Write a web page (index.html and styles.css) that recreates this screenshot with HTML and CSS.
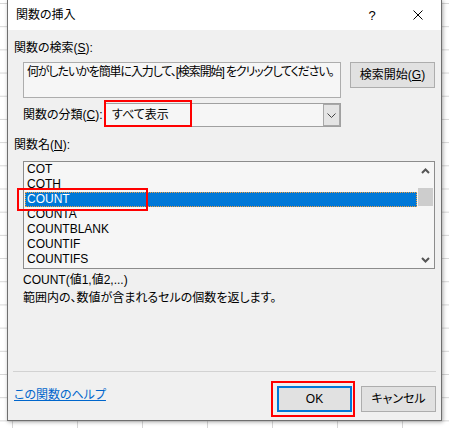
FILE: index.html
```html
<!DOCTYPE html>
<html lang="ja">
<head>
<meta charset="utf-8">
<title>関数の挿入</title>
<link rel="stylesheet" href="styles.css">
</head>
<body>
<div class="dialog">
  <div class="titlebar">
    <span class="title">関数の挿入</span>
    <span class="tb-btn help">?</span>
    <span class="tb-btn close">
      <svg width="10" height="10" viewBox="0 0 10 10"><path d="M0.5 0.5 L9.5 9.5 M9.5 0.5 L0.5 9.5" stroke="#000" stroke-width="1" fill="none"/></svg>
    </span>
  </div>
  <div class="body">
    <div class="label">関数の検索(<u>S</u>):</div>
    <div class="search-row">
      <div class="search-box">何がしたいかを簡単に入力して、[検索開始] をクリックしてください。</div>
      <div class="btn search-btn">検索開始(<u>G</u>)</div>
    </div>
    <div class="cat-row">
      <div class="cat-label">関数の分類(<u>C</u>):</div>
      <div class="select">
        <span class="select-text">すべて表示</span>
        <span class="select-arrow">
          <svg width="9" height="5" viewBox="0 0 9 5"><path d="M0.5 0.5 L4.5 4.5 L8.5 0.5" stroke="#444" stroke-width="1" fill="none"/></svg>
        </span>
        <span class="mark mark-cat"></span>
      </div>
    </div>
    <div class="label name-label">関数名(<u>N</u>):</div>
    <div class="listbox">
      <ul class="items">
        <li>COT</li>
        <li>COTH</li>
        <li class="selected">COUNT</li>
        <li>COUNTA</li>
        <li>COUNTBLANK</li>
        <li>COUNTIF</li>
        <li>COUNTIFS</li>
      </ul>
      <div class="scrollbar">
        <span class="sb-arrow">
          <svg width="9" height="6" viewBox="0 0 9 6"><path d="M1 5 L4.5 1.5 L8 5" stroke="#555" stroke-width="2" fill="none"/></svg>
        </span>
        <span class="sb-thumb"></span>
        <span class="sb-space"></span>
        <span class="sb-arrow">
          <svg width="9" height="6" viewBox="0 0 9 6"><path d="M1 1 L4.5 4.5 L8 1" stroke="#555" stroke-width="2" fill="none"/></svg>
        </span>
      </div>
      <span class="mark mark-count"></span>
    </div>
    <div class="desc">
      <div>COUNT(値1,値2,...)</div>
      <div>範囲内の、数値が含まれるセルの個数を返します。</div>
    </div>
    <div class="separator"></div>
    <div class="footer">
      <a class="help-link" href="#">この関数のヘルプ</a>
      <div class="buttons">
        <div class="btn ok-btn">OK<span class="mark mark-ok"></span></div>
        <div class="btn cancel-btn">キャンセル</div>
      </div>
    </div>
  </div>
</div>
</body>
</html>
```
FILE: styles.css
```css
* { box-sizing: border-box; }
html, body { margin: 0; padding: 0; }
body {
  width: 449px;
  height: 428px;
  overflow: hidden;
  background-color: #ffffff;
  background-image:
    linear-gradient(to right, #d6d6d6 1px, transparent 1px),
    linear-gradient(to bottom, #d6d6d6 1px, transparent 1px);
  background-size: 65px 23.2px;
  background-position: 12px 3px;
  font-family: "Liberation Sans", "Noto Sans CJK JP", sans-serif;
  font-size: 12px;
  font-feature-settings: "palt";
  color: #000;
}
u { text-decoration: underline; text-underline-offset: 1px; }
.dialog {
  margin-left: 7px;
  width: 435px;
  height: 421px;
  border: 1px solid #6f6f6f;
  border-top: 0;
  background: #f0f0f0;
  box-shadow: 1px 1px 4px rgba(0,0,0,0.35);
  display: flex;
  flex-direction: column;
}
.titlebar {
  height: 30px;
  background: #fff;
  display: flex;
  align-items: center;
  padding-left: 8px;
  flex: none;
}
.title { flex: 1; line-height: 16px; }
.tb-btn {
  width: 46px;
  height: 30px;
  display: flex;
  align-items: center;
  justify-content: center;
  font-size: 13px;
}
.body {
  flex: 1;
  display: flex;
  flex-direction: column;
  padding: 0 5px 8px 6px;
}
.label { line-height: 16px; margin-top: 10px; }
.search-row {
  display: flex;
  align-items: flex-start;
  margin-top: 6px;
  padding-left: 9px;
  gap: 9px;
}
.search-box {
  width: 318px;
  height: 36px;
  border: 1px solid #adadad;
  background: #f6f6f6;
  padding: 1px 3px;
  line-height: 16px;
  letter-spacing: -1.1px;
  white-space: nowrap;
  overflow: hidden;
}
.btn {
  height: 26px;
  background: #e1e1e1;
  border: 1px solid #adadad;
  display: flex;
  align-items: center;
  justify-content: center;
  line-height: 16px;
}
.search-btn { width: 85px; }
.cat-row {
  display: flex;
  align-items: center;
  margin-top: 5px;
  padding-left: 9px;
}
.cat-label { width: 82px; line-height: 16px; }
.select {
  position: relative;
  width: 236px;
  height: 24px;
  border: 1px solid #a0a0a0;
  background: #f6f6f6;
  display: flex;
  align-items: stretch;
}
.select-text { flex: 1; padding-left: 6px; line-height: 22px; }
.select-arrow {
  width: 17px;
  background: #e4e4e4;
  border: 1px solid #a8a8a8;
  display: flex;
  align-items: center;
  justify-content: center;
}
.name-label { margin-top: 10px; }
.listbox {
  position: relative;
  margin-top: 8px;
  margin-left: 9px;
  width: 412px;
  height: 108px;
  border: 1px solid #8c8c8c;
  background: #f6f6f6;
  display: flex;
}
.items {
  list-style: none;
  margin: 0 0 0 1px;
  padding: 0;
  width: 392px;
}
.items li {
  line-height: 15px;
  height: 15px;
  padding-left: 2px;
}
.items li.selected {
  background: #0078d7;
  color: #fff;
  outline: 1px dotted #f0a040;
  outline-offset: -1px;
}
.scrollbar {
  width: 17px;
  display: flex;
  flex-direction: column;
  align-items: center;
}
.sb-arrow {
  width: 17px;
  height: 17px;
  display: flex;
  align-items: center;
  justify-content: center;
}
.sb-thumb {
  margin-top: 9px;
  width: 15px;
  height: 18px;
  background: #cdcdcd;
}
.sb-space { flex: 1; }
.desc { margin-top: 2px; padding-left: 9px; line-height: 18px; }
.separator {
  margin-top: auto;
  height: 1px;
  background: #d2d2d2;
  margin-left: -1px;
  width: 423px;
}
.footer {
  margin-top: 14px;
  display: flex;
  align-items: flex-start;
  justify-content: space-between;
}
.help-link {
  color: #0066cc;
  text-decoration: underline;
  line-height: 18px;
}
.buttons { display: flex; gap: 9px; }
.ok-btn {
  position: relative;
  width: 75px;
  border: 2px solid #0078d7;
}
.cancel-btn { width: 75px; }
.mark {
  position: absolute;
  border: 2px solid #ff0000;
  pointer-events: none;
}
.mark-cat { left: -2px; top: -4px; width: 88px; height: 27px; }
.mark-count { left: -7px; top: 26px; width: 131px; height: 23px; }
.mark-ok { left: -8px; top: -7px; width: 84px; height: 36px; }
```
